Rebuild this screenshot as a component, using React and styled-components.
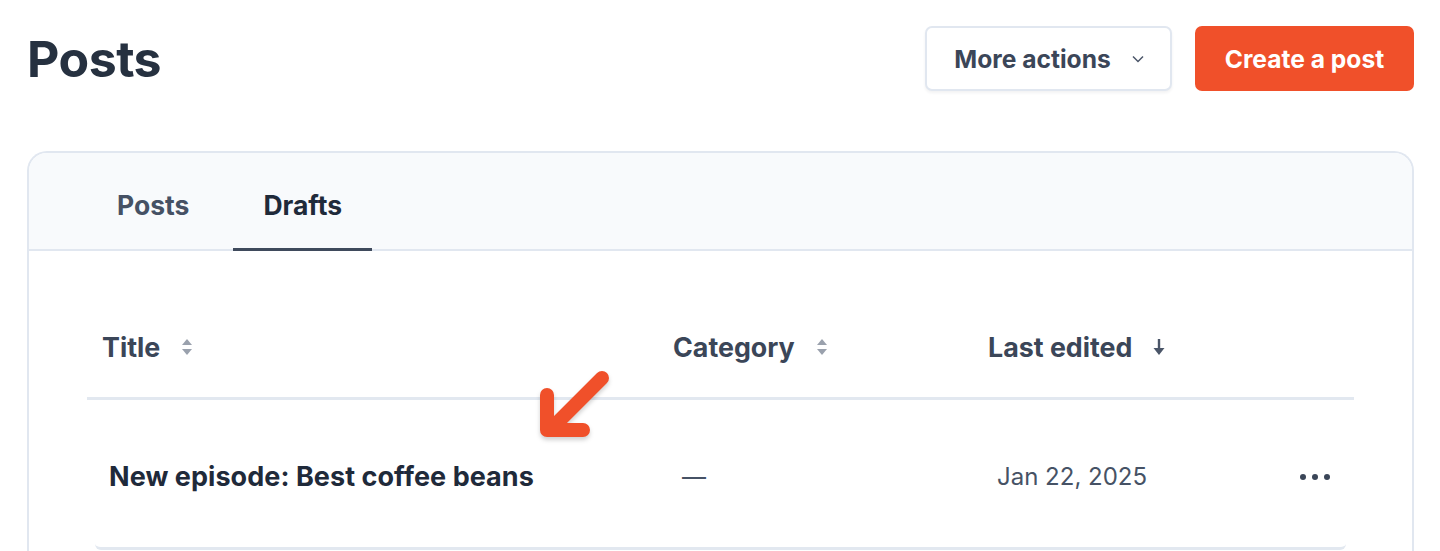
import React from "react";
import styled, { createGlobalStyle } from "styled-components";

const GlobalStyle = createGlobalStyle`
  html, body {
    margin: 0;
    padding: 0;
    background: #ffffff;
    font-family: Inter, "Open Sans", Arial, sans-serif;
    color: #27303f;
  }
`;

const columns = [
  { key: "title", label: "Title", sort: "both" },
  { key: "category", label: "Category", sort: "both" },
  { key: "edited", label: "Last edited", sort: "down" },
  { key: "actions", label: "", sort: null },
];

const drafts = [
  { title: "New episode: Best coffee beans", category: "—", edited: "Jan 22, 2025" },
];

const SortBoth = () => (
  <svg width="12" height="18" viewBox="0 0 12 18">
    <path d="M6 1 L11 7 H1 Z" fill="#9aa1ad" />
    <path d="M6 17 L11 11 H1 Z" fill="#9aa1ad" />
  </svg>
);

const SortDown = () => (
  <svg width="12" height="18" viewBox="0 0 12 18">
    <rect x="4.8" y="1" width="2.4" height="10" fill="#4a5568" />
    <path d="M6 17 L11.5 10 H0.5 Z" fill="#4a5568" />
  </svg>
);

const Chevron = () => (
  <svg width="14" height="10" viewBox="0 0 14 10">
    <path d="M2 2.5 L7 7.5 L12 2.5" fill="none" stroke="#4a5568" strokeWidth="1.5" />
  </svg>
);

const Pointer = () => (
  <Arrow width="100" height="100" viewBox="0 0 100 100">
    <g fill="none" stroke="#f0502a" strokeWidth="14" strokeLinecap="round" strokeLinejoin="round">
      <path d="M82 23 L33 72" />
      <path d="M27 40 L27 75 L63 75" />
    </g>
  </Arrow>
);

export default function App() {
  return (
    <Page>
      <GlobalStyle />
      <TopBar>
        <Heading>Posts</Heading>
        <Actions>
          <GhostButton>
            More actions <Chevron />
          </GhostButton>
          <PrimaryButton>Create a post</PrimaryButton>
        </Actions>
      </TopBar>

      <Card>
        <Tabs>
          <Tab>Posts</Tab>
          <Tab $active>Drafts</Tab>
        </Tabs>
        <TableWrap>
          <HeadRow>
            {columns.map((c) => (
              <HeadCell key={c.key}>
                {c.label}
                {c.sort === "both" && <SortBoth />}
                {c.sort === "down" && <SortDown />}
              </HeadCell>
            ))}
          </HeadRow>
          {drafts.map((d) => (
            <Row key={d.title}>
              <TitleCell>{d.title}</TitleCell>
              <Cell>{d.category}</Cell>
              <Cell>{d.edited}</Cell>
              <MenuCell>
                <Dot />
                <Dot />
                <Dot />
              </MenuCell>
            </Row>
          ))}
          <Pointer />
        </TableWrap>
      </Card>
    </Page>
  );
}

const Page = styled.div`
  padding: 26px 26px 0 27px;
  height: 551px;
  box-sizing: border-box;
  overflow: hidden;
`;

const TopBar = styled.div`
  display: flex;
  align-items: center;
  justify-content: space-between;
  height: 65px;
`;

const Heading = styled.h1`
  margin: 0;
  font-size: 50px;
  font-weight: 700;
  color: #263140;
  letter-spacing: -0.5px;
`;

const Actions = styled.div`
  display: flex;
  gap: 23px;
`;

const ButtonBase = styled.button`
  height: 65px;
  padding-top: 2px;
  border-radius: 7px;
  font-family: inherit;
  font-size: 24.6px;
  font-weight: 700;
  display: flex;
  align-items: center;
  justify-content: center;
  box-sizing: border-box;
  cursor: pointer;
`;

const GhostButton = styled(ButtonBase)`
  width: 247px;
  gap: 20px;
  background: #ffffff;
  color: #3b4658;
  border: 2px solid #e1e7f0;
  box-shadow: 0 2px 3px rgba(30, 41, 59, 0.06);
  padding-left: 8px;
`;

const PrimaryButton = styled(ButtonBase)`
  width: 219px;
  background: #f0502a;
  color: #ffffff;
  border: none;
`;

const Card = styled.div`
  position: relative;
  margin-top: 60px;
  border: 2px solid #e1e7f0;
  border-bottom: none;
  border-radius: 20px 20px 0 0;
  overflow: hidden;
  height: 420px;
`;

const Tabs = styled.div`
  display: flex;
  gap: 14px;
  height: 96px;
  padding-left: 58px;
  background: #f8fafc;
  border-bottom: 2px solid #e1e7f0;
`;

const Tab = styled.div`
  display: flex;
  align-items: center;
  padding: 9px 30px 0;
  font-size: 26.5px;
  font-weight: 700;
  color: ${(p) => (p.$active ? "#1f2a3a" : "#455164")};
  border-bottom: 3px solid ${(p) => (p.$active ? "#3f4a5c" : "transparent")};
  margin-bottom: -2px;
`;

const TableWrap = styled.div`
  position: relative;
  padding: 60px 58px 0;
`;

const Grid = styled.div`
  display: grid;
  grid-template-columns: 571px 315px 1fr 90px;
  align-items: center;
`;

const HeadRow = styled(Grid)`
  height: 89px;
  box-sizing: border-box;
  padding-bottom: 14px;
  border-bottom: 3px solid #e2e8f0;
`;

const HeadCell = styled.div`
  display: flex;
  align-items: center;
  gap: 21px;
  padding-left: 15px;
  font-size: 26.8px;
  font-weight: 700;
  color: #3b4658;
`;

const Row = styled(Grid)`
  height: 150px;
  box-sizing: border-box;
  padding-top: 6px;
  margin-left: 8px;
  margin-right: 8px;
  grid-template-columns: 563px 315px 1fr 82px;
  border-bottom: 3px solid #e2e8f0;
  border-radius: 0 0 6px 6px;
`;

const Cell = styled.div`
  padding-left: 24px;
  font-size: 24px;
  color: #465265;
`;

const TitleCell = styled(Cell)`
  padding-left: 14px;
  font-size: 27px;
  font-weight: 700;
  letter-spacing: 0.05px;
  color: #1f2a3a;
`;

const MenuCell = styled.div`
  display: flex;
  gap: 6px;
  padding-left: 36px;
`;

const Dot = styled.span`
  width: 6px;
  height: 6px;
  border-radius: 50%;
  background: #3b4658;
`;

const Arrow = styled.svg`
  position: absolute;
  left: 491px;
  top: 104px;
  filter: drop-shadow(0 3px 2px rgba(0, 0, 0, 0.18));
`;
